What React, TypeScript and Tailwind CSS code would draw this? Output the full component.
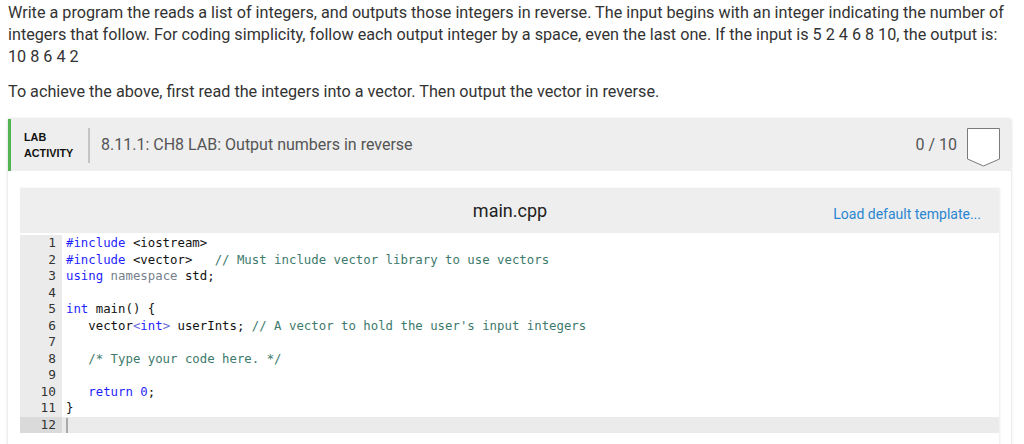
import React from "react"

const kw = "text-[#1f1fff]"
const cm = "text-[#3d7a6c]"
const ns = "text-[#75808c]"

const codeLines: React.ReactNode[] = [
  <><span className={kw}>#include</span> &lt;iostream&gt;</>,
  <><span className={kw}>#include</span> &lt;vector&gt;   <span className={cm}>// Must include vector library to use vectors</span></>,
  <><span className={kw}>using</span> <span className={ns}>namespace</span> std;</>,
  <></>,
  <><span className={kw}>int</span> main() {"{"}</>,
  <>   vector<span className="text-[#6a6ad8]">&lt;</span><span className={kw}>int</span><span className="text-[#6a6ad8]">&gt;</span> userInts; <span className={cm}>// A vector to hold the user's input integers</span></>,
  <></>,
  <>   <span className={cm}>/* Type your code here. */</span></>,
  <></>,
  <>   <span className={kw}>return</span> <span className={kw}>0</span>;</>,
  <>{"}"}</>,
  <></>,
]

function ScoreBox() {
  return (
    <svg width="34" height="40" viewBox="0 0 34 40" className="block">
      <polygon points="0.5,0.5 32.5,0.5 32.5,31 16.5,38 0.5,31" fill="white" stroke="#7a7a7a" strokeWidth="1" />
    </svg>
  )
}

export default function App() {
  return (
    <div className="w-[1024px] h-[444px] overflow-hidden bg-white font-['Roboto',sans-serif] text-[#333]">
      <div className="pl-2 pr-3 pt-[2px]">
        <p className="text-[16.2px] leading-[22px]">
          Write a program the reads a list of integers, and outputs those integers in reverse. The input begins with an integer indicating the number of integers that follow. For coding simplicity, follow each output integer by a space, even the last one. If the input is 5 2 4 6 8 10, the output is:
          <br />
          10 8 6 4 2
        </p>
        <p className="mt-[13px] text-[16.2px] leading-[22px]">
          To achieve the above, first read the integers into a vector. Then output the vector in reverse.
        </p>

        {/* Lab card */}
        <div className="mt-[16px] w-[1003px] bg-white shadow-[0_0_3px_rgba(0,0,0,0.18)]">
          <div className="h-[52px] flex items-center bg-[#eeeeee] border-l-[3px] border-[#52b552]">
            <div className="pl-[13px] w-[77px] text-[10.8px] leading-[16px] font-bold text-[#111] font-['Liberation_Sans',sans-serif]">
              LAB
              <br />
              ACTIVITY
            </div>
            <div className="w-[2px] h-[35px] bg-[#c4c4c4]" />
            <div className="ml-[11px] text-[16px] text-[#555] flex-1">8.11.1: CH8 LAB: Output numbers in reverse</div>
            <div className="text-[16px] text-[#555] mr-[10px]">0 / 10</div>
            <div className="mr-[10px] pt-[5px]">
              <ScoreBox />
            </div>
          </div>

          <div className="pl-[12px] pr-[12px] pt-[17px] pb-4">
            <div className="shadow-[1px_0_2px_rgba(0,0,0,0.08)]">
              <div className="h-[45px] bg-[#eeeeee] flex items-center relative">
                <div className="flex-1 text-center text-[18px] text-[#222] pl-[1px]">main.cpp</div>
                <div className="absolute right-[18px] top-[16px] text-[14px] text-[#2a86d1]">Load default template...</div>
              </div>
              <div className="flex font-['DejaVu_Sans_Mono',monospace] text-[12.35px] leading-[16.5px] pt-[2px] pb-10 bg-white">
                <div className="w-[42px] shrink-0 bg-[#ebebeb] text-[#333] text-[12.8px]">
                  {codeLines.map((_, i) => (
                    <div key={i} className={`pr-[6px] text-right h-[16.5px] ${i === 11 ? "bg-[#dadada]" : ""}`}>
                      {i + 1}
                    </div>
                  ))}
                </div>
                <div className="flex-1 text-[#111]">
                  {codeLines.map((line, i) => (
                    <div key={i} className={`pl-[4px] whitespace-pre h-[16.5px] ${i === 11 ? "bg-[#ebebeb]" : ""}`}>
                      {i === 11 ? <span className="inline-block w-[2px] h-[15px] bg-[#aaa] align-middle" /> : line}
                    </div>
                  ))}
                </div>
              </div>
            </div>
          </div>
        </div>
      </div>
    </div>
  )
}
